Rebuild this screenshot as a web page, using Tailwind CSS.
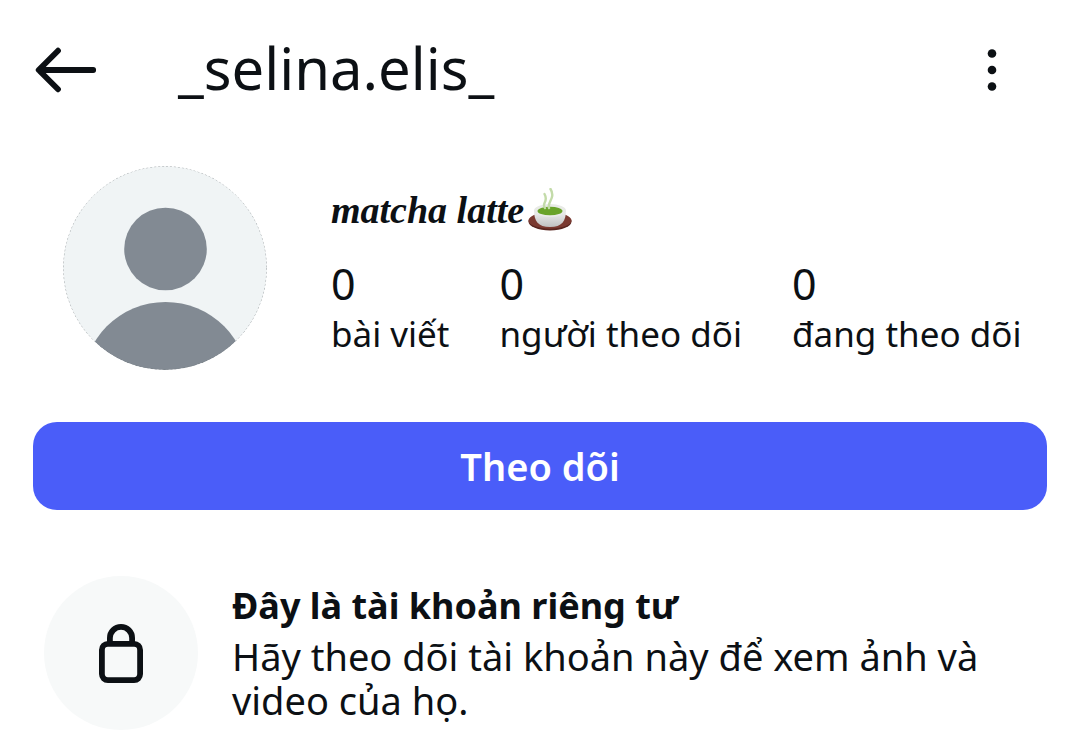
<!DOCTYPE html>
<html lang="vi">
<head>
  <meta charset="UTF-8">
  <meta name="viewport" content="width=device-width, initial-scale=1.0">
  <title>_selina.elis_</title>
  <script src="https://cdn.jsdelivr.net/npm/@tailwindcss/browser@4"></script>
</head>
<body class="bg-white text-[#0c1014] font-['Noto_Sans',sans-serif] overflow-x-hidden">

  <!-- Thanh tiêu đề -->
  <header class="flex items-center h-[140px] pl-8 pr-14">
    <button type="button" aria-label="Quay lại" class="shrink-0">
      <svg class="w-17 h-17" viewBox="0 0 68 68" fill="none" stroke="currentColor" stroke-width="5.8" stroke-linecap="round" stroke-linejoin="round">
        <path d="M61.200 34H7M26 14.700L6.700 34l19.300 19.300"/>
      </svg>
    </button>
    <h1 class="flex-1 pl-[78px] pb-1 text-[58px] leading-[72px]">_selina.elis_</h1>
    <button type="button" aria-label="Tùy chọn" class="shrink-0">
      <svg class="w-16 h-16" viewBox="0 0 64 64" fill="currentColor">
        <circle cx="32" cy="15.500" r="4.300"/>
        <circle cx="32" cy="32" r="4.300"/>
        <circle cx="32" cy="48.500" r="4.300"/>
      </svg>
    </button>
  </header>

  <main class="px-[33px]">
    <!-- Thông tin hồ sơ -->
    <section class="flex gap-16 pt-[26px] pl-[30px]">
      <svg class="w-51 h-51 shrink-0 rounded-full" viewBox="0 0 204 204" role="img" aria-label="Ảnh đại diện">
        <defs>
          <clipPath id="khung"><circle cx="102" cy="102" r="102"/></clipPath>
        </defs>
        <g clip-path="url(#khung)">
          <rect width="204" height="204" fill="#f0f4f5"/>
          <circle cx="102.500" cy="83" r="41.300" fill="#828a93"/>
          <circle cx="102.500" cy="219" r="83" fill="#828a93"/>
        </g>
        <circle cx="102" cy="102" r="101.800" fill="none" stroke="#6b7075" stroke-width=".5" stroke-dasharray="2 2"/>
      </svg>

      <div class="pt-5">
        <h2 class="flex items-center h-12 font-['Liberation_Serif',serif] font-bold italic text-[38px]">
          matcha latte
          <svg class="w-11 h-11 ml-1" viewBox="0 0 44 44" role="img" aria-label="Tách trà">
            <defs>
              <linearGradient id="coc" x1="0" y1="0" x2="0" y2="1">
                <stop offset="0" stop-color="#f4f4f4"/>
                <stop offset="1" stop-color="#bfc1c1"/>
              </linearGradient>
            </defs>
            <ellipse cx="22" cy="33.500" rx="21.500" ry="9" fill="#58251f"/>
            <ellipse cx="22" cy="32.500" rx="21.500" ry="8.300" fill="#7b3a31"/>
            <path d="M6 22c0 11 4 17 16 17s16-6 16-17z" fill="url(#coc)"/>
            <ellipse cx="22" cy="22.500" rx="16" ry="6.500" fill="#e8eae6"/>
            <ellipse cx="22" cy="23" rx="12.500" ry="4.300" fill="#69a329"/>
            <path d="M17 20c-4-5 4-6-.500-14M21 20c-2-6 7-10 1.500-19" fill="none" stroke="#c3dba9" stroke-width="2.400" stroke-linecap="round"/>
          </svg>
        </h2>
        <ul class="flex gap-[50px] pt-[26px] whitespace-nowrap">
          <li>
            <p class="text-[43px] leading-12">0</p>
            <p class="text-[35px] leading-[52px]">bài viết</p>
          </li>
          <li>
            <p class="text-[43px] leading-12">0</p>
            <p class="text-[35px] leading-[52px]">người theo dõi</p>
          </li>
          <li>
            <p class="text-[43px] leading-12">0</p>
            <p class="text-[35px] leading-[52px]">đang theo dõi</p>
          </li>
        </ul>
      </div>
    </section>

    <button type="button" class="block w-full h-22 mt-[52px] rounded-[24px] bg-[#4a5df9] text-white text-[38px] font-semibold">Theo dõi</button>

    <!-- Tài khoản riêng tư -->
    <section class="flex gap-[34px] pt-[66px] pl-[11px]">
      <div class="flex items-center justify-center w-[154px] h-[154px] shrink-0 rounded-full bg-[#f7f9f9]">
        <svg class="w-16 h-16" viewBox="0 0 64 64" fill="none" stroke="currentColor" stroke-width="5.800">
          <rect x="12.900" y="22.900" width="38.200" height="36.200" rx="6"/>
          <path d="M20.900 23v-6a11.100 11.100 0 0 1 22.200 0V23"/>
        </svg>
      </div>
      <div class="pt-1.5">
        <h3 class="text-[36px] leading-12 font-bold">Đây là tài khoản riêng tư</h3>
        <p class="pt-1 text-[38px] leading-11">Hãy theo dõi tài khoản này để xem ảnh và video của họ.</p>
      </div>
    </section>
  </main>

</body>
</html>
